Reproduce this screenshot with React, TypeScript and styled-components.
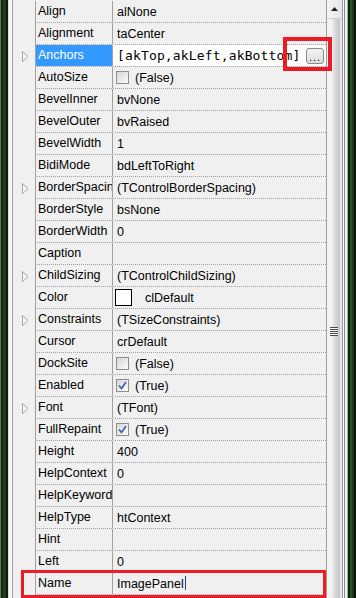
import React from "react";
import styled, {createGlobalStyle} from "styled-components";

const GlobalStyle = createGlobalStyle`
  * { box-sizing: border-box; }
  html, body { margin: 0; padding: 0; background: #f0f0f0; }
`

const Frame = styled.div`
  position: relative;
  display: flex;
  width: 356px;
  height: 598px;
  overflow: hidden;
  background: #f0f0f0;
  font-family: "Liberation Sans", Arial, sans-serif;
  font-size: 12.5px;
  color: #000;
`

const LeftEdge = styled.div`
  flex: none;
  width: 13px;
  background: linear-gradient(to right,
    #66735f 0 1px, #142a14 1px 3px, #1f3d1c 3px 6px, #0e1e0e 6px 8px,
    #dcdcdc 8px 9px, #f7f7f7 9px 12px, #a0a0a0 12px 13px);
`

const Grid = styled.div`
  flex: none;
  width: 314px;
  padding-top: 1px;
  border-right: 1px solid #a0a0a0;
  overflow: hidden;
`

const Row = styled.div`
  display: flex;
  height: 22px;
`

const Gutter = styled.div`
  flex: none;
  width: 22px;
  display: flex;
  align-items: center;
  padding-left: 9px;
`

const Cells = styled.div`
  flex: 1;
  display: grid;
  grid-template-columns: 77px 1fr;
  border-left: 1px solid #a0a0a0;
  border-bottom: 1px dotted #a0a0a0;
`

const NameCell = styled.div<{ $selected?: boolean }>`
  padding-left: 2px;
  line-height: 21px;
  white-space: nowrap;
  overflow: hidden;
  border-right: 1px solid #a0a0a0;
  background: ${p => p.$selected ? '#3399ff' : 'transparent'};
  color: ${p => p.$selected ? '#fff' : '#000'};
`

const ValueCell = styled.div<{ $edit?: boolean }>`
  display: flex;
  align-items: center;
  gap: 6px;
  padding-left: ${p => p.$edit ? '4px' : '3px'};
  padding-right: 2px;
  white-space: nowrap;
  overflow: hidden;
  background: ${p => p.$edit ? '#fff' : 'transparent'};
`

const PlainText = styled.span`
  padding-left: 1px;
`

const EditText = styled.span`
  flex: 1;
  overflow: hidden;
  font-family: "DejaVu Sans Mono", "Liberation Mono", monospace;
  font-size: 13px;
  letter-spacing: 0.15px;
`

const DotsButton = styled.div`
  flex: none;
  width: 18px;
  height: 16px;
  border: 1px solid #8a8a8a;
  border-radius: 3px;
  background: linear-gradient(#f4f4f4, #dcdcdc);
  font-size: 11px;
  line-height: 16px;
  text-align: center;
  letter-spacing: 1px;
`

const Box = styled.span`
  flex: none;
  width: 13px;
  height: 13px;
  border: 1px solid #8e8f8f;
  background: linear-gradient(135deg, #d6d6d6, #fbfbfb);
  display: flex;
  align-items: center;
  justify-content: center;
`

const Swatch = styled.span`
  flex: none;
  width: 17px;
  height: 17px;
  margin-left: -1px;
  margin-right: 7px;
  border: 1px solid #000;
  background: #fff;
`

const Caret = styled.span`
  display: inline-block;
  width: 1px;
  height: 14px;
  margin-left: 1px;
  vertical-align: -2px;
  background: #1a3fb0;
`

const ScrollBar = styled.div`
  flex: none;
  width: 15px;
  display: flex;
  flex-direction: column;
  overflow: hidden;
  background: #e8e8e8;
`

const ArrowButton = styled.div`
  flex: none;
  height: 19px;
  display: flex;
  align-items: center;
  justify-content: center;
  background: linear-gradient(to right, #f4f4f4, #e6e6e6);
  border-bottom: 1px solid #d0d0d0;
`

const Thumb = styled.div`
  flex: none;
  height: 624px;
  display: flex;
  align-items: center;
  justify-content: center;
  padding-right: 2px;
  background: linear-gradient(to right,
    #f2f2f2 0 5px, #dedede 7px, #c4c4c4 13px, #e6e6e6 13px 15px);
`

const Grip = styled.div`
  width: 8px;
  height: 9px;
  background: repeating-linear-gradient(#4a4a4a 0 1px, #f8f8f8 1px 2px, transparent 2px 2px);
`

const RightEdge = styled.div`
  flex: none;
  width: 14px;
  background: linear-gradient(to right,
    #9a9a9a 0 1px, #fafafa 1px 2px, #8c8c8c 2px 3px, #f0f0f0 3px 5px,
    #a8b0a8 5px 6px, #102010 6px 8px, #2a5424 8px 10px, #1a3a18 10px 12px, #0c180c 12px 14px);
`

const Highlight = styled.div<{ $w: number }>`
  position: absolute;
  border: ${p => p.$w}px solid #ed1c24;
  pointer-events: none;
`

const AnchorsMark = styled(Highlight)`
  left: 283px;
  top: 37px;
  width: 49px;
  height: 34px;
`

const NameMark = styled(Highlight)`
  left: 21px;
  top: 570px;
  width: 305px;
  height: 28px;
`

const Expander = () =>
  <svg width="7" height="11" viewBox="0 0 7 11">
    <polygon points="0.5,0.5 6,5.5 0.5,10.5" fill="#f6f6f6" stroke="#a6a6a6" strokeWidth="1"/>
  </svg>

const CheckMark = () =>
  <svg width="9" height="9" viewBox="0 0 9 9">
    <path d="M1 4.5 L3.5 7.5 L8 1" fill="none" stroke="#3c5ca8" strokeWidth="1.6"/>
  </svg>

type Prop = {
  name: string
  value?: string
  kind?: 'check' | 'color' | 'edit' | 'caret'
  checked?: boolean
  expandable?: boolean
}

const properties: Prop[] = [
  {name: 'Align', value: 'alNone'},
  {name: 'Alignment', value: 'taCenter'},
  {name: 'Anchors', value: '[akTop,akLeft,akBottom]', kind: 'edit', expandable: true},
  {name: 'AutoSize', value: '(False)', kind: 'check'},
  {name: 'BevelInner', value: 'bvNone'},
  {name: 'BevelOuter', value: 'bvRaised'},
  {name: 'BevelWidth', value: '1'},
  {name: 'BidiMode', value: 'bdLeftToRight'},
  {name: 'BorderSpacing', value: '(TControlBorderSpacing)', expandable: true},
  {name: 'BorderStyle', value: 'bsNone'},
  {name: 'BorderWidth', value: '0'},
  {name: 'Caption'},
  {name: 'ChildSizing', value: '(TControlChildSizing)', expandable: true},
  {name: 'Color', value: 'clDefault', kind: 'color'},
  {name: 'Constraints', value: '(TSizeConstraints)', expandable: true},
  {name: 'Cursor', value: 'crDefault'},
  {name: 'DockSite', value: '(False)', kind: 'check'},
  {name: 'Enabled', value: '(True)', kind: 'check', checked: true},
  {name: 'Font', value: '(TFont)', expandable: true},
  {name: 'FullRepaint', value: '(True)', kind: 'check', checked: true},
  {name: 'Height', value: '400'},
  {name: 'HelpContext', value: '0'},
  {name: 'HelpKeyword'},
  {name: 'HelpType', value: 'htContext'},
  {name: 'Hint'},
  {name: 'Left', value: '0'},
  {name: 'Name', value: 'ImagePanel', kind: 'caret'},
  // next row only peeks in under the bottom edge
  {name: ''},
]

const Value: React.FC<{ prop: Prop }> = ({prop}) => {
  switch (prop.kind) {
    case 'edit':
      return <>
        <EditText>{prop.value}</EditText>
        <DotsButton>...</DotsButton>
      </>
    case 'check':
      return <>
        <Box>{prop.checked && <CheckMark/>}</Box>
        <span>{prop.value}</span>
      </>
    case 'color':
      return <>
        <Swatch/>
        <span>{prop.value}</span>
      </>
    case 'caret':
      return <PlainText>{prop.value}<Caret/></PlainText>
    default:
      return <PlainText>{prop.value}</PlainText>
  }
}

export default function App() {
  return <Frame>
    <GlobalStyle/>
    <LeftEdge/>
    <Grid>
      {
        properties.map((prop, index) =>
          <Row key={index + prop.name}>
            <Gutter>{prop.expandable && <Expander/>}</Gutter>
            <Cells>
              <NameCell $selected={prop.kind === 'edit'}>{prop.name}</NameCell>
              <ValueCell $edit={prop.kind === 'edit'}>
                <Value prop={prop}/>
              </ValueCell>
            </Cells>
          </Row>
        )
      }
    </Grid>
    <ScrollBar>
      <ArrowButton>
        <svg width="7" height="4" viewBox="0 0 7 4">
          <polygon points="0,4 3.5,0 7,4" fill="#1e1e1e"/>
        </svg>
      </ArrowButton>
      <Thumb><Grip/></Thumb>
    </ScrollBar>
    <RightEdge/>
    <AnchorsMark $w={4}/>
    <NameMark $w={3}/>
  </Frame>
}
